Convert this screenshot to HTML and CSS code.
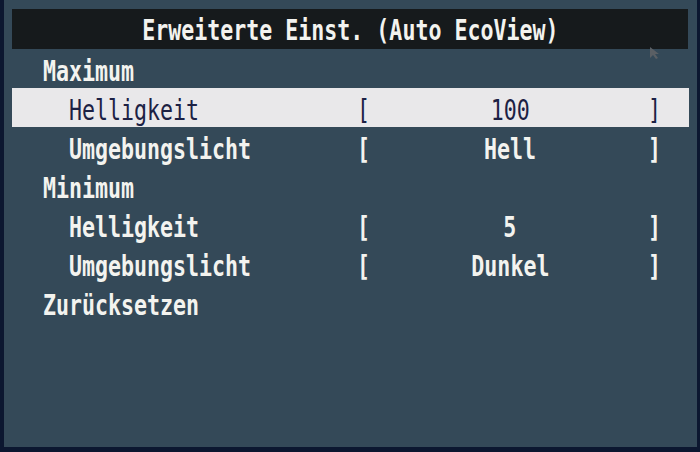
FILE: index.html
```html
<!DOCTYPE html>
<html lang="de">
<head>
  <meta charset="UTF-8" />
  <title>Erweiterte Einst. (Auto EcoView)</title>
  <link rel="stylesheet" href="styles.css">
</head>
<body>

  <div class="screen">
    <div class="panel">
      <div class="title"><span class="t mid">Erweiterte Einst. (Auto EcoView)</span></div>

      <div class="row section"><span class="label"><span class="t">Maximum</span></span></div>

      <div class="row item active">
        <span class="label"><span class="t">Helligkeit</span></span>
        <span class="br"><span class="t">[</span></span>
        <span class="val"><span class="t mid">100</span></span>
        <span class="br"><span class="t">]</span></span>
      </div>

      <div class="row item">
        <span class="label"><span class="t">Umgebungslicht</span></span>
        <span class="br"><span class="t">[</span></span>
        <span class="val"><span class="t mid">Hell</span></span>
        <span class="br"><span class="t">]</span></span>
      </div>

      <div class="row section"><span class="label"><span class="t">Minimum</span></span></div>

      <div class="row item">
        <span class="label"><span class="t">Helligkeit</span></span>
        <span class="br"><span class="t">[</span></span>
        <span class="val"><span class="t mid">5</span></span>
        <span class="br"><span class="t">]</span></span>
      </div>

      <div class="row item">
        <span class="label"><span class="t">Umgebungslicht</span></span>
        <span class="br"><span class="t">[</span></span>
        <span class="val"><span class="t mid">Dunkel</span></span>
        <span class="br"><span class="t">]</span></span>
      </div>

      <div class="row section"><span class="label"><span class="t">Zurücksetzen</span></span></div>

      <svg class="cursor" width="14" height="14" viewBox="0 0 14 14">
        <path d="M2 1 L2 12 L5 9 L8 13 L10 12 L7 8 L11 8 Z" fill="#5a5f64" />
      </svg>
    </div>
  </div>

</body>
</html>
```

FILE: styles.css
```css
body {
  margin: 0;
  background: #0c1730;
  font-family: "DejaVu Sans Mono", "Liberation Mono", monospace;
  color: #f3f3ef;
}

.screen {
  width: 700px;
  height: 452px;
  overflow: hidden;
}

.panel {
  position: relative;
  height: 447px;
  margin: 0 3px 0 4px;
  padding: 9px 8px 0 8px;
  box-sizing: border-box;
  background: #344958;
}

.title {
  height: 40px;
  margin-right: 1px;
  padding-top: 3px;
  box-sizing: border-box;
  background: #161a1c;
  display: flex;
  align-items: center;
  justify-content: center;
  font-size: 29px;
  font-weight: bold;
  line-height: 1;
}

.t {
  display: inline-block;
  white-space: pre;
  transform: scaleX(0.745);
  transform-origin: left center;
}

.t.mid {
  transform-origin: center center;
}

.row {
  display: grid;
  grid-template-columns: 345px 20px 1fr 20px;
  align-items: center;
  height: 39px;
  padding: 5px 21px 0 0;
  box-sizing: border-box;
  font-size: 29px;
  font-weight: bold;
  line-height: 1;
}

.section .label {
  padding-left: 31px;
}

.item .label {
  padding-left: 57px;
}

.val {
  text-align: center;
  padding-right: 5px;
}

.active {
  background: #e9e8ea;
  color: #1c2144;
  font-weight: normal;
}

.cursor {
  position: absolute;
  top: 46px;
  left: 644px;
}
```
